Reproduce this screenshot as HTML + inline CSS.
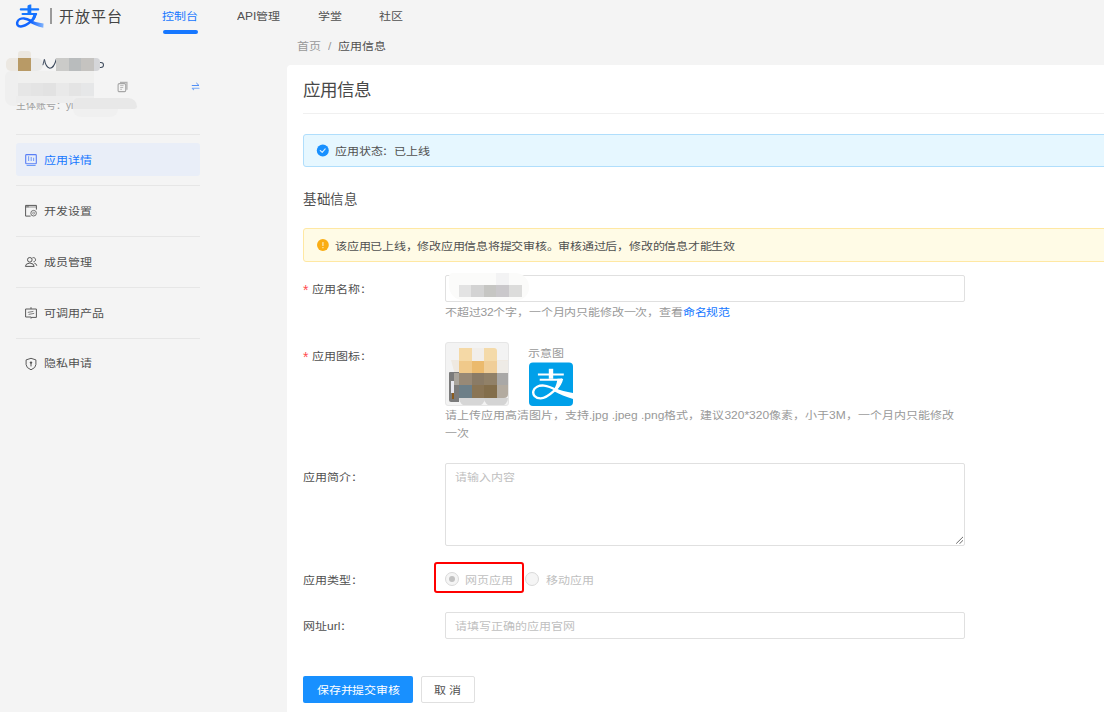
<!DOCTYPE html>
<html lang="zh-CN"><head><meta charset="utf-8">
<style>
*{margin:0;padding:0;box-sizing:border-box}
html,body{width:1104px;height:712px;overflow:hidden;background:#f4f4f4;font-family:"Liberation Sans",sans-serif;font-size:12px;color:#505050}
.a{position:absolute;white-space:nowrap;line-height:14px}
.s{transform:scaleY(.87)}
.hdiv{position:absolute;height:1px;background:#e6e6e6}
</style></head><body>
<!-- header -->
<svg class="a" style="left:0;top:0" width="50" height="32" viewBox="0 0 50 32">
<defs><linearGradient id="lg" x1="31" y1="0" x2="44" y2="0" gradientUnits="userSpaceOnUse"><stop offset="0" stop-color="#0f62ff"/><stop offset="1" stop-color="#86b6fb"/></linearGradient></defs>
<path d="M20.8 9.4H38.2" stroke="#1677ff" stroke-width="2.1" stroke-linecap="round" fill="none"/>
<path d="M27.5 5.8Q28.2 4.7 30 4.5L31.3 4.4V13.4H27.5Z" fill="#1677ff"/>
<path d="M22.5 14H36.2" stroke="#1677ff" stroke-width="2" stroke-linecap="round" fill="none"/>
<path d="M35.4 13.2C35.2 17 33.5 19.6 30.5 21.8C27 24.6 23.5 26.6 20.6 26.4C17.8 26.2 16.8 24.6 17.2 22.6C17.8 19.6 21 18.2 24 18.4C26.5 18.6 28.5 19.4 30.5 20.6" stroke="#1266ff" stroke-width="2.5" fill="none"/>
<path d="M33.5 13.2L36.8 13.2C36.4 16 35.4 18.6 33.4 20.6L30 20.8C32 18.6 33.2 16.4 33.5 13.2Z" fill="#1670ff"/>
<path d="M29.4 19.4C33 21.2 38 22.6 43.6 23.4L43.3 27.7C37.5 26.4 32.5 24.6 28.8 22Z" fill="url(#lg)"/>
</svg>
<div class="a" style="left:50px;top:8px;width:2px;height:16px;background:#9a9a9a"></div>
<div class="a" style="left:59px;top:8px;font-size:15px;line-height:17px;letter-spacing:0.9px;color:#444">开放平台</div>
<div class="a s" style="left:162px;top:10px;color:#1677ff">控制台</div>
<div class="a" style="left:163px;top:30px;width:35px;height:4px;border-radius:2px;background:#1677ff"></div>
<div class="a s" style="left:237px;top:10px;color:#505050">API管理</div>
<div class="a s" style="left:318px;top:10px;color:#505050">学堂</div>
<div class="a s" style="left:379px;top:10px;color:#505050">社区</div>

<!-- breadcrumb -->
<div class="a s" style="left:297px;top:40px;color:#999">首页</div><div class="a s" style="left:328px;top:40px;color:#999">/</div><div class="a s" style="left:338px;top:40px;color:#505050">应用信息</div>

<!-- sidebar -->
<div class="a" style="left:6px;top:58px;width:12px;height:13px;background:#ece8e2;border-radius:5px 0 0 5px"></div>
<div class="a" style="left:18px;top:51px;width:13px;height:7px;background:#ebe7e0;border-radius:3px 3px 0 0"></div>
<div class="a" style="left:18px;top:58px;width:13px;height:13px;background:#b89a66"></div>
<div class="a" style="left:31px;top:58px;width:12px;height:13px;background:#ebebea;border-radius:0 6px 6px 0"></div>
<svg class="a" style="left:40px;top:56px" width="18" height="14" viewBox="0 0 18 14"><path d="M4.4 3.4Q5.6 11 9.8 12.3Q13.8 12.4 16.4 3" stroke="#3d4a5c" stroke-width="1.1" fill="none"/><path d="M4.3 3.4L2.9 9.2" stroke="#4a5568" stroke-width="1"/></svg>
<div class="a" style="left:56px;top:58px;width:13px;height:13px;background:#cbcbc9"></div>
<div class="a" style="left:69px;top:58px;width:12px;height:13px;background:#b9bcbd"></div>
<div class="a" style="left:81px;top:58px;width:13px;height:13px;background:#c5c3c0"></div>

<div class="a" style="left:97px;top:62px;width:6.5px;height:6px;border:1.3px solid #3d4a5c;border-radius:50%"></div>
<div class="a" style="left:94px;top:58px;width:6px;height:13px;background:#d5d6d9;border-radius:0 4px 4px 0"></div>
<div class="a" style="left:5px;top:71px;width:13px;height:35px;background:#efefef;border-radius:6px 0 0 8px"></div>
<div class="a" style="left:18px;top:71px;width:76px;height:12px;background:#f0f0ef"></div>
<div class="a" style="left:18px;top:83px;width:13px;height:13px;background:#e6e6e6"></div>
<div class="a" style="left:31px;top:83px;width:12px;height:13px;background:#e4e4e4"></div>
<div class="a" style="left:43px;top:83px;width:13px;height:13px;background:#e2e2e2"></div>
<div class="a" style="left:56px;top:83px;width:13px;height:13px;background:#e9e9e9"></div>
<div class="a" style="left:69px;top:83px;width:12px;height:13px;background:#e4e4e4"></div>
<div class="a" style="left:81px;top:83px;width:13px;height:13px;background:#e6e7e8"></div>
<div class="a" style="left:18px;top:96px;width:13px;height:7px;background:#e8e8e8"></div>
<div class="a" style="left:31px;top:96px;width:12px;height:7px;background:#e2e2e2"></div>
<div class="a" style="left:43px;top:96px;width:13px;height:7px;background:#e6e6e6"></div>
<div class="a" style="left:56px;top:96px;width:38px;height:7px;background:#eeeeee"></div>
<div class="a" style="left:16px;top:99px;color:#a0a0a0;font-size:10px;line-height:13px;overflow:hidden;height:14px;width:57px">主体账号：yi</div>
<div class="a" style="left:16px;top:96px;width:57px;height:7px;background:#ededed"></div>
<div class="a" style="left:73px;top:98px;width:64px;height:11px;background:#e8e8e8;border-radius:8px 14px 4px 0"></div>
<div class="a" style="left:73px;top:109px;width:45px;height:8px;background:#f0f0f0;border-radius:0 0 8px 8px"></div>
<svg class="a" style="left:116px;top:80px" width="13" height="14" viewBox="0 0 13 14"><path d="M4 2.3H10.9V9.8" stroke="#b0b0b0" stroke-width="1.3" fill="none"/><rect x="2.1" y="3.6" width="7.6" height="8" rx="1.2" stroke="#a6a6a6" stroke-width="1.1" fill="#f4f4f4"/><path d="M4.2 5.6H7.6M4.2 7.5H7.2M4.2 9.3H6" stroke="#b4b4b4" stroke-width="0.9"/></svg>
<svg class="a" style="left:190px;top:81px" width="12" height="11" viewBox="0 0 12 11"><path d="M2.2 4.5H9L6.6 2.2" stroke="#4a8af5" stroke-width="0.95" fill="none" stroke-linecap="round" stroke-linejoin="round"/><path d="M9 7.2H2.2L3.6 8.7" stroke="#7aaaf7" stroke-width="1.1" fill="none" stroke-linecap="round" stroke-linejoin="round"/></svg>
<div class="hdiv" style="left:16px;top:134px;width:184px"></div>
<div class="a" style="left:16px;top:143px;width:184px;height:33px;border-radius:3px;background:#e9eef8"></div>
<svg class="a" style="left:24px;top:152px" width="14" height="16" viewBox="0 0 14 16"><rect x="1.7" y="2.6" width="10.6" height="9.2" rx="0.8" stroke="#5a7ff6" stroke-width="1.1" fill="none"/><path d="M2.6 13.5H11.6" stroke="#6a9af8" stroke-width="1"/><path d="M4.6 4.2V8.9M7.2 5V8.9M9.6 5.8V8.9" stroke="#7ba2f8" stroke-width="1.1"/></svg>
<svg class="a" style="left:24px;top:203px" width="14" height="16" viewBox="0 0 14 16"><rect x="1.6" y="2.4" width="10.8" height="2.6" fill="#c4c4c4"/><rect x="2.2" y="2.6" width="2.6" height="1.8" fill="#8a8a8a"/><path d="M6.6 13.1H1.6V2.4H12.4V6.6" stroke="#5a5a5a" stroke-width="1" fill="none"/><circle cx="9.6" cy="10.2" r="2.8" stroke="#6a6a6a" stroke-width="0.95" fill="#f4f4f4"/><circle cx="9.6" cy="10.2" r="1" stroke="#808080" stroke-width="0.8" fill="none"/></svg>
<svg class="a" style="left:24px;top:254px" width="14" height="16" viewBox="0 0 14 16"><circle cx="5.8" cy="5.8" r="2.3" stroke="#555" stroke-width="1" fill="none"/><path d="M8.4 3.9A2.1 2.1 0 1 1 9.4 7.8" stroke="#5a5a5a" stroke-width="0.95" fill="none"/><path d="M1.4 12.4Q1.6 9.3 5.4 9.2H6.2Q9.9 9.3 10.2 12.4Z" stroke="#555" stroke-width="1" fill="none" stroke-linejoin="round"/><path d="M10.3 9.2Q12.6 9.6 12.8 11.8" stroke="#5a5a5a" stroke-width="0.95" fill="none"/></svg>
<svg class="a" style="left:24px;top:305px" width="14" height="16" viewBox="0 0 14 16"><path d="M7 2.2V4H1.6V12H7M7 4H12.4V12.4H7V13.6" stroke="#5a5a5a" stroke-width="1" fill="none"/><path d="M3.8 7.4L9.4 6.4M4.6 9.4L10.2 8.4" stroke="#707070" stroke-width="0.9" fill="none"/></svg>
<svg class="a" style="left:24px;top:356px" width="14" height="16" viewBox="0 0 14 16"><path d="M7 2.3L11.9 3.9V8.6Q11.9 11.8 7 13.8Q2.1 11.8 2.1 8.6V3.9Z" stroke="#5a5a5a" stroke-width="1" fill="none" stroke-linejoin="round"/><circle cx="7" cy="6.6" r="1.2" fill="#555"/><path d="M7 7.2V10.4" stroke="#555" stroke-width="1"/></svg>
<div class="a s" style="left:44px;top:154px;color:#1677ff">应用详情</div>
<div class="hdiv" style="left:16px;top:185px;width:184px"></div>
<div class="a s" style="left:44px;top:205px">开发设置</div>
<div class="hdiv" style="left:16px;top:236px;width:184px"></div>
<div class="a s" style="left:44px;top:256px">成员管理</div>
<div class="hdiv" style="left:16px;top:287px;width:184px"></div>
<div class="a s" style="left:44px;top:307px">可调用产品</div>
<div class="hdiv" style="left:16px;top:338px;width:184px"></div>
<div class="a s" style="left:44px;top:357px">隐私申请</div>

<!-- card -->
<div class="a" style="left:287px;top:65px;width:830px;height:660px;background:#fff;border-radius:4px"></div>
<div class="a" style="left:303px;top:81px;font-size:17.5px;line-height:19px;color:#484848">应用信息</div>
<div class="hdiv" style="left:303px;top:113px;width:820px;background:#f0f0f0"></div>

<div class="a" style="left:303px;top:134px;width:820px;height:33px;background:#e6f7ff;border:1px solid #b0defc;border-radius:3px"></div>
<svg class="a" style="left:316px;top:144px" width="14" height="14" viewBox="0 0 14 14"><circle cx="6.8" cy="6.4" r="6" fill="#1890ff"/><path d="M4.2 6.5L6.2 8.3L9.2 4.8" stroke="#d6ebff" stroke-width="1.1" fill="none" stroke-linecap="round" stroke-linejoin="round"/></svg>
<div class="a s" style="left:335px;top:145px;letter-spacing:-0.15px">应用状态：已上线</div>

<div class="a" style="left:303px;top:192px;font-size:13.5px;line-height:16px;letter-spacing:0.5px">基础信息</div>

<div class="a" style="left:303px;top:228px;width:820px;height:34px;background:#fffbe6;border:1px solid #ffe8a3;border-radius:3px"></div>
<svg class="a" style="left:316px;top:238px" width="14" height="14" viewBox="0 0 14 14"><circle cx="6.9" cy="7" r="5.9" fill="#faad14"/><rect x="6" y="4" width="1.8" height="4" rx="0.5" fill="#fcd88a"/><rect x="6" y="9" width="1.8" height="1.2" rx="0.4" fill="#fcd88a"/></svg>
<div class="a s" style="left:335px;top:240px;letter-spacing:-0.24px">该应用已上线，修改应用信息将提交审核。审核通过后，修改的信息才能生效</div>

<!-- form -->
<div class="a" style="left:303px;top:283px;font-size:14px;line-height:14px;color:#ff4d4f">*</div><div class="a s" style="left:312px;top:283px">应用名称：</div>
<div class="a" style="left:445px;top:275px;width:520px;height:27px;border:1px solid #e0e0e0;border-radius:2px;background:#fff"></div>
<div class="a" style="left:449px;top:273px;width:80px;height:27px;background:#fbfbfa;border-radius:4px 14px 12px 14px"></div>
<div class="a" style="left:459px;top:285px;width:12px;height:12px;background:#e3e3e3"></div>
<div class="a" style="left:471px;top:285px;width:13px;height:12px;background:#d3d3d3"></div>
<div class="a" style="left:484px;top:285px;width:12px;height:12px;background:#c6c6c3"></div>
<div class="a" style="left:496px;top:285px;width:13px;height:12px;background:#cac8cb"></div>
<div class="a" style="left:509px;top:285px;width:13px;height:12px;background:#dcdcdb"></div>
<div class="a" style="left:496px;top:273px;width:13px;height:12px;background:#f3f3f4"></div>
<div class="a s" style="left:445px;top:306px;color:#999;letter-spacing:-0.17px">不超过32个字，一个月内只能修改一次，查看<span style="color:#1677ff">命名规范</span></div>

<div class="a" style="left:303px;top:350px;font-size:14px;line-height:14px;color:#ff4d4f">*</div><div class="a s" style="left:312px;top:350px">应用图标：</div>
<div class="a" style="left:445px;top:342px;width:64px;height:64px;border:1px solid #e6e6e6;border-radius:3px;background:#f3f3f3;overflow:hidden">
<div class="a" style="left:5px;top:17px;width:58px;height:13px;background:#efe9e1;clip-path:polygon(0 0,100% 0,100% 100%,6% 100%)"></div>
<div class="a" style="left:13px;top:5px;width:13px;height:13px;background:#f5d9a6"></div>
<div class="a" style="left:26px;top:5px;width:12px;height:13px;background:#f1eeea"></div>
<div class="a" style="left:38px;top:5px;width:13px;height:13px;background:#f4daa9;border-radius:0 3px 0 0"></div>
<div class="a" style="left:13px;top:18px;width:13px;height:12px;background:#f0c98a"></div>
<div class="a" style="left:26px;top:18px;width:12px;height:12px;background:#ebba6d"></div>
<div class="a" style="left:38px;top:18px;width:13px;height:12px;background:#f0ce98"></div>
<div class="a" style="left:51px;top:18px;width:11px;height:12px;background:#eeebe6"></div>
<div class="a" style="left:3px;top:29px;width:10px;height:30px;background:#7b7b7b;border-radius:1px 0 0 2px"></div>
<div class="a" style="left:8px;top:30px;width:5px;height:12px;background:#a9a49c"></div>
<div class="a" style="left:13px;top:30px;width:13px;height:12px;background:#988976"></div>
<div class="a" style="left:26px;top:30px;width:12px;height:12px;background:#8a7b66"></div>
<div class="a" style="left:38px;top:30px;width:13px;height:12px;background:#918168"></div>
<div class="a" style="left:51px;top:30px;width:11px;height:12px;background:#a9a8a7"></div>
<div class="a" style="left:13px;top:42px;width:13px;height:13px;background:#6d7f88"></div>
<div class="a" style="left:26px;top:42px;width:12px;height:13px;background:#8a7555"></div>
<div class="a" style="left:38px;top:42px;width:13px;height:13px;background:#836e4b"></div>
<div class="a" style="left:51px;top:42px;width:11px;height:13px;background:#b3aba0;border-radius:0 0 4px 0"></div>
<div class="a" style="left:13px;top:55px;width:26px;height:8px;background:#d6d6d6;border-radius:0 0 12px 12px"></div>
<div class="a" style="left:38px;top:55px;width:24px;height:8px;background:#d4d4d4;border-radius:0 0 12px 12px"></div>
<div class="a" style="left:5px;top:38px;width:3px;height:12px;background:#e8e8f0"></div>
<div class="a" style="left:6px;top:50px;width:2px;height:6px;background:#8b5a1c"></div>
</div>
<div class="a s" style="left:528px;top:347px;color:#999">示意图</div>
<svg class="a" style="left:529px;top:362px" width="44" height="44" viewBox="0 0 44 44"><defs><clipPath id="cp"><rect x="0" y="0.5" width="44" height="43.5" rx="4"/></clipPath></defs><g clip-path="url(#cp)"><rect x="0" y="0" width="44" height="44" fill="#00a0e9"/>
<path d="M8.9 12.5H34.8" stroke="#fff" stroke-width="2.1"/><rect x="19.8" y="6.8" width="4.4" height="10" fill="#fff"/><path d="M10.7 17.7H33" stroke="#fff" stroke-width="1.9"/>
<path d="M33 16.8C32 21.5 29.5 25 26 28C21.5 32 17 36.6 11.5 36.4C6 36.2 3.5 32.5 4.4 29C5.4 25.2 10 23.2 15 23.6C19.5 24 23.5 26 27 28C32 30.8 38 33 46 35" stroke="#fff" stroke-width="2.4" fill="none"/>
<path d="M28.5 16.8H33.4C32.8 20.6 31 24 28.6 26.6L25 27C27 24 28 20.6 28.5 16.8Z" fill="#fff"/>
<path d="M26 26C32 28.6 38 30.2 46 31.2V37.6C38 35.4 31 32.6 25.5 29.5Z" fill="#fff"/>
</g></svg>
<div class="a s" style="left:445px;top:409px;color:#999">请上传应用高清图片，支持.jpg .jpeg .png格式，建议320*320像素，小于3M，一个月内只能修改</div><div class="a s" style="left:445px;top:427px;color:#999">一次</div>

<div class="a s" style="left:303px;top:471px">应用简介：</div>
<div class="a" style="left:445px;top:463px;width:520px;height:83px;border:1px solid #e0e0e0;border-radius:2px;background:#fff"></div>
<div class="a s" style="left:455px;top:471px;color:#bfbfbf">请输入内容</div>
<svg class="a" style="left:954px;top:535px" width="9" height="9" viewBox="0 0 9 9"><path d="M2.2 8.6L9 1.9M5.4 8.9L9 5.3" stroke="#5a5a5a" stroke-width="0.9"/></svg>

<div class="a s" style="left:303px;top:574px">应用类型：</div>
<div class="a" style="left:434px;top:562px;width:90px;height:31px;border:2px solid #f00;border-radius:3px"></div>
<div class="a" style="left:445px;top:572px;width:14px;height:14px;border:1px solid #d9d9d9;border-radius:50%;background:#f5f5f5"><div class="a" style="left:3px;top:3px;width:6px;height:6px;border-radius:50%;background:#c2c2c2"></div></div>
<div class="a s" style="left:465px;top:574px;color:#bfbfbf">网页应用</div>
<div class="a" style="left:525px;top:572px;width:14px;height:14px;border:1px solid #d9d9d9;border-radius:50%;background:#f5f5f5"></div>
<div class="a s" style="left:546px;top:574px;color:#bfbfbf">移动应用</div>

<div class="a s" style="left:303px;top:620px">网址url：</div>
<div class="a" style="left:445px;top:612px;width:520px;height:27px;border:1px solid #e0e0e0;border-radius:2px;background:#fff"></div>
<div class="a s" style="left:455px;top:620px;color:#bfbfbf">请填写正确的应用官网</div>

<div class="a" style="left:303px;top:676px;width:110px;height:27px;background:#1890ff;border-radius:2px"></div>
<div class="a s" style="left:317px;top:684px;color:#fff;letter-spacing:-0.2px">保存并提交审核</div>
<div class="a" style="left:421px;top:676px;width:54px;height:27px;border:1px solid #e0e0e0;border-radius:2px;background:#fff"></div>
<div class="a s" style="left:434px;top:684px">取 消</div>
</body></html>
